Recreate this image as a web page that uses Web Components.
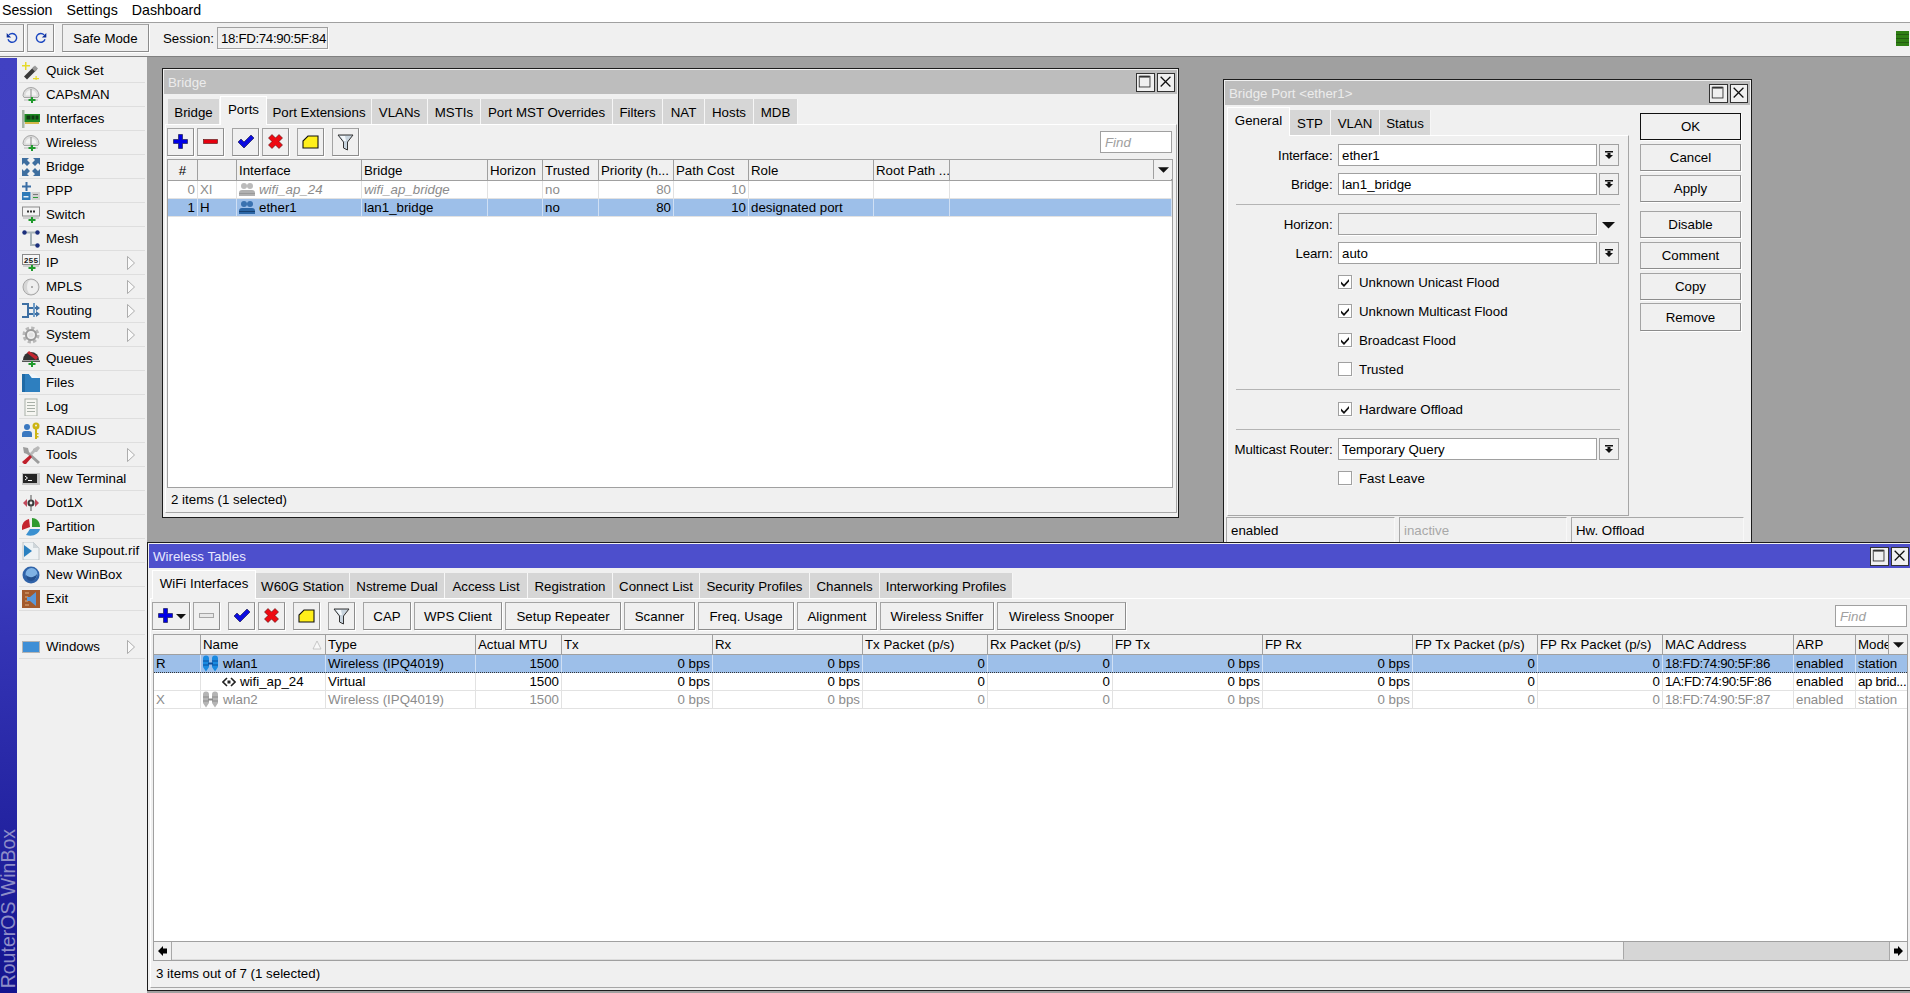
<!DOCTYPE html>
<html>
<head>
<meta charset="utf-8">
<title>WinBox</title>
<style>
	html, body { margin: 0; height: 100%; overflow: hidden; background: #a0a0a0; }
	body { font: 13.3px "Liberation Sans", Arial, sans-serif; color: #000; }
</style>
</head>
<body>
<wb-app>
	<wb-menubar>
		<span>Session</span><span>Settings</span><span>Dashboard</span>
	</wb-menubar>
	<wb-topbar>
		<wb-btn style="width:25px;margin-left:-1px"><wb-icon name="undo" size="16"></wb-icon></wb-btn>
		<wb-btn style="width:27px"><wb-icon name="redo" size="16"></wb-icon></wb-btn>
		<wb-btn style="width:87px;margin-left:5px">Safe Mode</wb-btn>
		<span style="margin-left:11px">Session:</span>
		<wb-readout>18:FD:74:90:5F:84</wb-readout>
		<wb-led></wb-led>
	</wb-topbar>
	<wb-sidebar>
		<wb-item icon="quickset">Quick Set</wb-item>
		<wb-item icon="antenna">CAPsMAN</wb-item>
		<wb-item icon="interfaces">Interfaces</wb-item>
		<wb-item icon="antenna">Wireless</wb-item>
		<wb-item icon="bridge">Bridge</wb-item>
		<wb-item icon="ppp">PPP</wb-item>
		<wb-item icon="switch">Switch</wb-item>
		<wb-item icon="mesh">Mesh</wb-item>
		<wb-item icon="ip" more>IP</wb-item>
		<wb-item icon="mpls" more>MPLS</wb-item>
		<wb-item icon="routing" more>Routing</wb-item>
		<wb-item icon="system" more>System</wb-item>
		<wb-item icon="queues">Queues</wb-item>
		<wb-item icon="files">Files</wb-item>
		<wb-item icon="log">Log</wb-item>
		<wb-item icon="radius">RADIUS</wb-item>
		<wb-item icon="tools" more>Tools</wb-item>
		<wb-item icon="terminal">New Terminal</wb-item>
		<wb-item icon="dot1x">Dot1X</wb-item>
		<wb-item icon="partition">Partition</wb-item>
		<wb-item icon="supout">Make Supout.rif</wb-item>
		<wb-item icon="winbox">New WinBox</wb-item>
		<wb-item icon="exit">Exit</wb-item>
		<wb-item></wb-item>
		<wb-item icon="windows" more>Windows</wb-item>
	</wb-sidebar>
	<wb-desktop>
		<wb-window heading="Bridge" style="left:15px;top:11px;width:1017px;height:450px">
			<wb-tabs>
				<wb-tab style="width:52px">Bridge</wb-tab>
				<wb-tab active style="width:47px">Ports</wb-tab>
				<wb-tab style="width:105px">Port Extensions</wb-tab>
				<wb-tab style="width:56px">VLANs</wb-tab>
				<wb-tab style="width:53px">MSTIs</wb-tab>
				<wb-tab style="width:132px">Port MST Overrides</wb-tab>
				<wb-tab style="width:50px">Filters</wb-tab>
				<wb-tab style="width:42px">NAT</wb-tab>
				<wb-tab style="width:49px">Hosts</wb-tab>
				<wb-tab style="width:44px">MDB</wb-tab>
			</wb-tabs>
			<wb-panel style="flex:1;margin-bottom:3px">
				<wb-bar>
					<wb-btn style="width:27px"><wb-icon name="add"></wb-icon></wb-btn>
					<wb-btn style="width:27px"><wb-icon name="remove"></wb-icon></wb-btn>
					<wb-btn style="width:27px;margin-left:5px"><wb-icon name="check"></wb-icon></wb-btn>
					<wb-btn style="width:27px"><wb-icon name="cross"></wb-icon></wb-btn>
					<wb-btn style="width:27px;margin-left:5px"><wb-icon name="note"></wb-icon></wb-btn>
					<wb-btn style="width:27px;margin-left:5px"><wb-icon name="filter"></wb-icon></wb-btn>
					<wb-find style="margin-right:4px"></wb-find>
				</wb-bar>
				<wb-table style="margin-top:3px;width:1006px;flex:1;--head-h:21px;--cols:30px 39px 125px 126px 55px 56px 75px 75px 125px 76px 1fr">
					<wb-row head>
						<wb-c c>#</wb-c><wb-c></wb-c><wb-c>Interface</wb-c><wb-c>Bridge</wb-c><wb-c>Horizon</wb-c><wb-c>Trusted</wb-c><wb-c>Priority (h...</wb-c><wb-c>Path Cost</wb-c><wb-c>Role</wb-c><wb-c>Root Path ...</wb-c><wb-c></wb-c>
					</wb-row>
					<wb-row off>
						<wb-c n>0</wb-c><wb-c>XI</wb-c><wb-c i><wb-icon name="portoff" size="16"></wb-icon><span style="margin-left:4px">wifi_ap_24</span></wb-c><wb-c i>wifi_ap_bridge</wb-c><wb-c></wb-c><wb-c>no</wb-c><wb-c n>80</wb-c><wb-c n>10</wb-c><wb-c></wb-c><wb-c></wb-c><wb-c></wb-c>
					</wb-row>
					<wb-row sel>
						<wb-c n>1</wb-c><wb-c>H</wb-c><wb-c><wb-icon name="port" size="16"></wb-icon><span style="margin-left:4px">ether1</span></wb-c><wb-c>lan1_bridge</wb-c><wb-c></wb-c><wb-c>no</wb-c><wb-c n>80</wb-c><wb-c n>10</wb-c><wb-c>designated port</wb-c><wb-c></wb-c><wb-c></wb-c>
					</wb-row>
				</wb-table>
				<wb-status style="height:24px;padding-bottom:2px">2 items (1 selected)</wb-status>
			</wb-panel>
		</wb-window>

		<wb-window heading="Bridge Port &lt;ether1&gt;" style="left:1076px;top:22px;width:529px;height:470px">
			<wb-split>
				<div>
					<wb-tabs style="padding-left:2px">
						<wb-tab active style="width:63px">General</wb-tab>
						<wb-tab style="width:41px">STP</wb-tab>
						<wb-tab style="width:49px">VLAN</wb-tab>
						<wb-tab style="width:51px">Status</wb-tab>
					</wb-tabs>
					<wb-form>
						<wb-field label="Interface:" value="ether1"></wb-field>
						<wb-field label="Bridge:" value="lan1_bridge"></wb-field>
						<wb-sep></wb-sep>
						<wb-field label="Horizon:" disabled></wb-field>
						<wb-field label="Learn:" value="auto"></wb-field>
						<wb-check checked>Unknown Unicast Flood</wb-check>
						<wb-check checked>Unknown Multicast Flood</wb-check>
						<wb-check checked>Broadcast Flood</wb-check>
						<wb-check>Trusted</wb-check>
						<wb-sep></wb-sep>
						<wb-check checked>Hardware Offload</wb-check>
						<wb-sep></wb-sep>
						<wb-field label="Multicast Router:" value="Temporary Query"></wb-field>
						<wb-check>Fast Leave</wb-check>
					</wb-form>
				</div>
				<wb-actions>
					<wb-btn primary>OK</wb-btn>
					<wb-btn>Cancel</wb-btn>
					<wb-btn>Apply</wb-btn>
					<wb-btn style="margin-top:5px">Disable</wb-btn>
					<wb-btn>Comment</wb-btn>
					<wb-btn>Copy</wb-btn>
					<wb-btn style="height:28px;margin-top:-1px">Remove</wb-btn>
				</wb-actions>
			</wb-split>
			<wb-cells>
				<wb-cell style="width:169px">enabled</wb-cell>
				<wb-cell style="width:168px;color:#a8a8a8">inactive</wb-cell>
				<wb-cell style="width:173px">Hw. Offload</wb-cell>
			</wb-cells>
		</wb-window>

		<wb-window heading="Wireless Tables" focused style="left:0;top:485px;width:1766px;height:449px">
			<wb-tabs style="padding-left:3px">
				<wb-tab active style="width:104px">WiFi Interfaces</wb-tab>
				<wb-tab style="width:94px">W60G Station</wb-tab>
				<wb-tab style="width:95px">Nstreme Dual</wb-tab>
				<wb-tab style="width:83px">Access List</wb-tab>
				<wb-tab style="width:85px">Registration</wb-tab>
				<wb-tab style="width:87px">Connect List</wb-tab>
				<wb-tab style="width:110px">Security Profiles</wb-tab>
				<wb-tab style="width:70px">Channels</wb-tab>
				<wb-tab style="width:133px">Interworking Profiles</wb-tab>
			</wb-tabs>
			<wb-panel style="flex:1;margin-bottom:1px">
				<wb-bar>
					<wb-btn style="width:38px"><wb-icon name="add"></wb-icon><wb-icon name="caret" size="10" style="margin-left:1px"></wb-icon></wb-btn>
					<wb-btn style="width:27px"><wb-icon name="removeoff"></wb-icon></wb-btn>
					<wb-btn style="width:27px;margin-left:5px"><wb-icon name="check"></wb-icon></wb-btn>
					<wb-btn style="width:27px"><wb-icon name="cross"></wb-icon></wb-btn>
					<wb-btn style="width:27px;margin-left:5px"><wb-icon name="note"></wb-icon></wb-btn>
					<wb-btn style="width:27px;margin-left:5px"><wb-icon name="filter"></wb-icon></wb-btn>
					<wb-btn style="width:48px;margin-left:5px">CAP</wb-btn>
					<wb-btn style="width:88px">WPS Client</wb-btn>
					<wb-btn style="width:116px">Setup Repeater</wb-btn>
					<wb-btn style="width:71px">Scanner</wb-btn>
					<wb-btn style="width:96px">Freq. Usage</wb-btn>
					<wb-btn style="width:80px">Alignment</wb-btn>
					<wb-btn style="width:114px">Wireless Sniffer</wb-btn>
					<wb-btn style="width:129px">Wireless Snooper</wb-btn>
					<wb-find style="margin-right:3px"></wb-find>
				</wb-bar>
				<wb-table style="margin:4px 0 0 1px;width:1755px;flex:1;--cols:47px 125px 150px 86px 151px 150px 125px 125px 150px 150px 125px 125px 131px 62px 53px">
					<wb-row head>
						<wb-c></wb-c><wb-c>Name<wb-icon name="sort" size="10" style="margin-left:auto;margin-right:1px"></wb-icon></wb-c><wb-c>Type</wb-c><wb-c>Actual MTU</wb-c><wb-c>Tx</wb-c><wb-c>Rx</wb-c><wb-c>Tx Packet (p/s)</wb-c><wb-c>Rx Packet (p/s)</wb-c><wb-c>FP Tx</wb-c><wb-c>FP Rx</wb-c><wb-c>FP Tx Packet (p/s)</wb-c><wb-c>FP Rx Packet (p/s)</wb-c><wb-c>MAC Address</wb-c><wb-c>ARP</wb-c><wb-c>Mode</wb-c>
					</wb-row>
					<wb-row sel focus>
						<wb-c>R</wb-c><wb-c><wb-icon name="wlan" size="17" style="margin:0 4px 0 -1px"></wb-icon>wlan1</wb-c><wb-c>Wireless (IPQ4019)</wb-c><wb-c n>1500</wb-c><wb-c n>0 bps</wb-c><wb-c n>0 bps</wb-c><wb-c n>0</wb-c><wb-c n>0</wb-c><wb-c n>0 bps</wb-c><wb-c n>0 bps</wb-c><wb-c n>0</wb-c><wb-c n>0</wb-c><wb-c mac>18:FD:74:90:5F:86</wb-c><wb-c>enabled</wb-c><wb-c>station</wb-c>
					</wb-row>
					<wb-row>
						<wb-c></wb-c><wb-c><wb-icon name="virtual" size="14" style="margin:0 4px 0 19px"></wb-icon>wifi_ap_24</wb-c><wb-c>Virtual</wb-c><wb-c n>1500</wb-c><wb-c n>0 bps</wb-c><wb-c n>0 bps</wb-c><wb-c n>0</wb-c><wb-c n>0</wb-c><wb-c n>0 bps</wb-c><wb-c n>0 bps</wb-c><wb-c n>0</wb-c><wb-c n>0</wb-c><wb-c mac>1A:FD:74:90:5F:86</wb-c><wb-c>enabled</wb-c><wb-c mac style="padding:0 0 0 2px">ap brid...</wb-c>
					</wb-row>
					<wb-row off>
						<wb-c>X</wb-c><wb-c><wb-icon name="wlanoff" size="17" style="margin:0 4px 0 -1px"></wb-icon>wlan2</wb-c><wb-c>Wireless (IPQ4019)</wb-c><wb-c n>1500</wb-c><wb-c n>0 bps</wb-c><wb-c n>0 bps</wb-c><wb-c n>0</wb-c><wb-c n>0</wb-c><wb-c n>0 bps</wb-c><wb-c n>0 bps</wb-c><wb-c n>0</wb-c><wb-c n>0</wb-c><wb-c mac>18:FD:74:90:5F:87</wb-c><wb-c>enabled</wb-c><wb-c>station</wb-c>
					</wb-row>
					<wb-scroll slot="foot"></wb-scroll>
				</wb-table>
				<wb-status style="height:26px;padding-bottom:2px">3 items out of 7 (1 selected)</wb-status>
			</wb-panel>
		</wb-window>
	</wb-desktop>
</wb-app>

<script>
const
	GREEN_PLUS = '<path d="M6.5 13H9v-2h2v2h2.5v2H11v2H9v-2H6.5z" fill="#1f9a2c"/>',
	OUTLINE = 'stroke="#10103a" stroke-width=".6"',
	ICONS = Object.freeze({
		undo: '<path d="M5.5 5.5a5 5 0 1 1-1 5" fill="none" stroke="#1a46c0" stroke-width="1.6"/><path d="M3 3.5v5h5z" fill="#0d2f9c"/>',
		redo: '<path d="M12.5 5.5a5 5 0 1 0 1 5" fill="none" stroke="#1a46c0" stroke-width="1.6"/><path d="M15 3.5v5h-5z" fill="#0d2f9c"/>',
		quickset: '<path d="M2 14.5 12 4.5l3 3-10 10z" fill="#3a3a3a"/><path d="M10 6.5l3-3 3 3-3 3z" fill="#9a9a9a"/><path d="M3 0h1.5v3H8v1.5H4.5V8H3V4.5H0V3h3z" fill="#e6d92a"/><path d="M13.5 14h1.2v2H17v1.2h-2.3V18h-1.2v-.8H11V16h2.5z" fill="#e6d92a"/>',
		antenna: '<path d="M1 9.5a8 8 0 0 1 16 0l-1 2H2z" fill="#dcdcdc" stroke="#a6a6a6"/><path d="M3.5 9.5a5.5 5.5 0 0 1 11 0z" fill="#f2f2f2"/><rect x="8.5" y="3" width="1" height="10" fill="#8a8a8a"/><rect x="2" y="13.5" width="14" height="1" fill="#b8b8b8"/>' + GREEN_PLUS,
		interfaces: '<rect x="0" y="0" width="2.5" height="18" fill="#a7b5a7"/><rect x="2.5" y="4" width="15.5" height="8" fill="#1d8a22"/><rect x="4.5" y="5.5" width="4" height="4" fill="#123b14"/><rect x="9.5" y="5.5" width="3" height="4" fill="#123b14"/><rect x="13.5" y="5.5" width="3" height="4" fill="#123b14"/><path d="M3 12h14v2H3z" fill="#d4b84a"/>',
		bridge: '<g fill="#3e6e9f"><path d="M0 0h7L5 2l3 3-3 3-3-3-2 2z"/><path d="M18 0v7l-2-2-3 3-3-3 3-3-2-2z"/><path d="M0 18v-7l2 2 3-3 3 3-3 3 2 2z"/><path d="M18 18h-7l2-2-3-3 3-3 3 3 2-2z"/></g>',
		ppp: '<path d="M3.5 0h2v3.5H9v2H5.5V9h-2V5.5H0v-2h3.5z" fill="#3a6ea5"/><rect x="0" y="10" width="8.5" height="8" fill="#2e7ab8"/><rect x="1.5" y="14" width="5" height="1.5" fill="#e6f0f8"/><rect x="9.5" y="10" width="8.5" height="8" fill="#d2d2d2"/><rect x="11" y="12" width="5" height="1" fill="#7a7a7a"/><rect x="11" y="15" width="5" height="1" fill="#2f9a3a"/>',
		switch: '<rect x=".5" y="1" width="17" height="9" fill="#f4f4f4" stroke="#8a8a8a"/><g fill="#333"><rect x="5" y="4.5" width="2" height="2"/><rect x="8" y="4.5" width="2" height="2"/><rect x="11" y="4.5" width="2" height="2"/></g><rect x="1" y="11.5" width="16" height="1" fill="#b0b0b0"/>' + GREEN_PLUS,
		mesh: '<path d="M3 2.5h12M9 2.5V15h5" fill="none" stroke="#a8b4b8" stroke-width="2"/><circle cx="2.5" cy="2.5" r="2.2" fill="#1c2f7c"/><circle cx="15.5" cy="2.5" r="2.2" fill="#1c2f7c"/><circle cx="15.5" cy="15.5" r="2.2" fill="#1c2f7c"/>',
		ip: '<rect x=".5" y=".5" width="17" height="10" fill="#f6f6f6" stroke="#8a8a8a"/><text x="9" y="8.5" font-family="Liberation Mono, monospace" font-size="8" font-weight="700" text-anchor="middle" fill="#222">255</text><rect x="1" y="11.5" width="16" height="1" fill="#b0b0b0"/>' + GREEN_PLUS,
		mpls: '<circle cx="9" cy="9" r="8" fill="#d6d6d6" stroke="#a8a8a8"/><path d="M9 2a7 7 0 0 1 0 14 4 7 0 0 1 0-14z" fill="#efefef"/><circle cx="10" cy="9" r="1" fill="#999"/>',
		routing: '<path d="M0 2h6v13H0M6 6h10M6 12h10" fill="none" stroke="#3d6fa3" stroke-width="2"/><path d="M12 1v14" fill="none" stroke="#6f9dc8" stroke-width="2"/><path d="M14 3l4 3-4 3zM14 9l4 3-4 3z" fill="#3d6fa3"/>',
		system: '<circle cx="9" cy="9" r="6.5" fill="none" stroke="#b8b8b8" stroke-width="4" stroke-dasharray="3 2"/><circle cx="9" cy="9" r="5" fill="none" stroke="#9a9a9a" stroke-width="2"/><circle cx="9" cy="9" r="2.5" fill="#e2e2e2"/>',
		queues: '<path d="M1 10a8 8 0 0 1 16 0z" fill="#333"/><path d="M5 3l2-2 9 6-2 3z" fill="#c2242e"/><rect x="0" y="10.5" width="18" height="1.5" fill="#555"/>' + GREEN_PLUS,
		files: '<path d="M0 0h7l3 4h8v14H0z" fill="#2e7fbf"/><path d="M7 0l3 4h8L12 0z" fill="#f0f6fb"/><path d="M0 0h3v18H0z" fill="#1f6aa6"/>',
		log: '<rect x="3" y="1" width="12" height="17" fill="#f6f6f2" stroke="#a8b0a8"/><g fill="#a8b0a8"><rect x="5" y="4" width="8" height="1"/><rect x="5" y="7" width="8" height="1"/><rect x="5" y="10" width="8" height="1"/><rect x="5" y="13" width="8" height="1"/></g>',
		radius: '<circle cx="5" cy="5" r="3" fill="#3a78c0"/><path d="M0 15v-3a3 3 0 0 1 3-3h4a3 3 0 0 1 3 3v3z" fill="#3a78c0"/><circle cx="14" cy="4" r="3.5" fill="#cdb513"/><circle cx="14" cy="3.5" r="1" fill="#f0f0f0"/><path d="M13 7h2v10h-2zM15 11h1.5v1.5H15zM15 14h1.5v1.5H15z" fill="#cdb513"/>',
		tools: '<path d="M1 1l5 1 1 4 11 10-2 2L5 8 2 7z" fill="#9c9c9c"/><path d="M16 0l2 2-3 4h-2L10 9 8 7l3-3V3z" fill="#b8b8b8"/><path d="M8 9l2 2-6 7H2l-2-2z" fill="#c0202c"/>',
		terminal: '<rect x="0" y="3" width="18" height="12" fill="#c4c4c4"/><rect x="1" y="4" width="14" height="9" fill="#252525"/><path d="M3 6l2.5 2L3 10" fill="none" stroke="#fff"/><rect x="6" y="10" width="4" height="1" fill="#fff"/>',
		dot1x: '<g fill="#c0485a"><path d="M1 9l4-4v8zM17 9l-4-4v8z"/></g><circle cx="9" cy="9" r="3.5" fill="#3a3a3a"/><rect x="8.5" y="1" width="1" height="16" fill="#555"/><circle cx="9" cy="9" r="1.4" fill="#eee"/>',
		partition: '<path d="M7 1 8 9 0 12C-1 7 2 2 7 1z" fill="#c4242e"/><path d="M10 0c4 0 8 3 8 9h-8z" fill="#2f9a2f"/><path d="M8 11h10c-1 5-7 8-14 6z" fill="#3a90d0"/>',
		supout: '<path d="M1 0h10l6 6v12H1z" fill="#eef2f4" stroke="#b4bcc0" stroke-width=".8"/><path d="M11 0v6h6z" fill="#cfd6da"/><path d="M2 3v12l8-6z" fill="#2a80c0"/>',
		winbox: '<circle cx="9" cy="9" r="8.5" fill="#2f62a8"/><circle cx="9.5" cy="8" r="6" fill="#7fb2e4"/><path d="M4 9c3 3 8 3 11-1 0 4-3 7-6 7-3 0-5-3-5-6z" fill="#24508e"/>',
		exit: '<rect x="0" y="0" width="18" height="18" fill="#a35a2c"/><path d="M3 3h4M3 7h3M3 11h3M3 15h4" stroke="#e0b080"/><path d="M14 2v14L8 11H5V7h3z" fill="#5a98d8"/>',
		windows: '<rect x="0" y="3" width="18" height="12" fill="#b4b4b4"/><rect x="1" y="4" width="16" height="10" fill="#3f8fd6"/>',
		add: '<path d="M6.5 1.5h4v5h5v4h-5v5h-4v-5h-5v-4h5z" fill="#0000e6" ' + OUTLINE + '/>',
		remove: '<rect x="1.5" y="6.5" width="14" height="4" fill="#e6000e" stroke="#501010" stroke-width=".6"/>',
		removeoff: '<rect x="1.5" y="6.5" width="14" height="4" fill="#e8e8e8" stroke="#a6a6a6"/>',
		check: '<path d="M1 9l3-3 3 3 7-7 3 3L7 15z" fill="#0c0ce0" ' + OUTLINE + '/>',
		cross: '<path d="M5 1.5 8.5 5 12 1.5 15.5 5 12 8.5l3.5 3.5-3.500 3.5L8.5 12 5 15.5 1.5 12 5 8.5 1.5 5z" fill="#ee0a12" stroke="#501010" stroke-width=".6"/>',
		note: '<path d="M6 3h10v12H1V8z" fill="#ffef1a" stroke="#111" stroke-width="1.1"/>',
		filter: '<path d="M1 2h15l-5.5 7v8l-4-2V9z" fill="#c8d4de" stroke="#333"/><path d="M3 3h5l1 5H7z" fill="#f4f8fb"/>',
		caret: '<path d="M0 3h10L5 8z" fill="#111"/>',
		sort: '<path d="M5 1l4 8H1z" fill="#f8f8f8" stroke="#bbb" stroke-width=".8"/>',
		combo: '<rect x="3" y="3" width="8" height="1.5" fill="#111"/><path d="M5.5 5v2H3l4 4 4-4H8.5V5z" fill="#111"/>',
		port: '<circle cx="5" cy="4" r="3" fill="#3a72b0"/><circle cx="11" cy="4" r="3" fill="#3a72b0"/><path d="M0 14v-3a3 3 0 0 1 3-3h10a3 3 0 0 1 3 3v3z" fill="#2c66a6"/><rect x="0" y="11" width="16" height="1" fill="#17406f"/>',
		portoff: '<circle cx="5" cy="4" r="3" fill="#bbb"/><circle cx="11" cy="4" r="3" fill="#bbb"/><path d="M0 14v-3a3 3 0 0 1 3-3h10a3 3 0 0 1 3 3v3z" fill="#b0b0b0"/><rect x="0" y="11" width="16" height="1" fill="#999"/>',
		wlan: '<g fill="#1a8ae0"><path d="M1 3.5a3 3 0 0 1 6 0V12l-3 4.5L1 12z"/><path d="M10 3.5a3 3 0 0 1 6 0V12l-3 4.5-3-4.5z"/></g><path d="M1 6h6M10 6h6M1 10h6M10 10h6" stroke="#0b4f9e"/><rect x="6" y="7.5" width="5" height="2" fill="#0b4f9e"/>',
		wlanoff: '<g fill="#b4b4b4"><path d="M1 3.5a3 3 0 0 1 6 0V12l-3 4.5L1 12z"/><path d="M10 3.5a3 3 0 0 1 6 0V12l-3 4.5-3-4.5z"/></g><path d="M1 6h6M10 6h6M1 10h6M10 10h6" stroke="#8c8c8c"/><rect x="6" y="7.5" width="5" height="2" fill="#8c8c8c"/>',
		virtual: '<path d="M5 3 1 7l4 4M9 3l4 4-4 4" fill="none" stroke="#222" stroke-width="1.6"/><rect x="5.5" y="5.5" width="3" height="3" fill="#222"/>'
	}),
	VIEWBOX = Object.freeze({ combo: 14, caret: 10, sort: 10, port: 16, portoff: 16, virtual: 14, wlan: 17, wlanoff: 17 }),
	BTN_EDGE = `
		border: 1px solid;
		border-color: #a4a4a4 #8c8c8c #8c8c8c #a4a4a4;
		box-shadow: 1px 1px 0 #fff;
		background: #f0f0f0;
		box-sizing: border-box;
	`;

//	all elements are the same: css plus a markup built from the element's attributes
function define(tag, css, render) {
	customElements.define(tag, class extends HTMLElement {
		connectedCallback() {
			if (this.shadowRoot) {
				return;
			}
			const s = this.attachShadow({ mode: 'open' });
			s.innerHTML = `<style>${css}</style>` + (render ? render(this) : '<slot></slot>');
		}
	});
}

function icon(name, size) {
	const box = VIEWBOX[name] || 18;
	return `<svg width="${size || box}" height="${size || box}" viewBox="0 0 ${box} ${box}" style="display:block">${ICONS[name] || ''}</svg>`;
}

define('wb-icon', ':host { display: inline-flex; flex: none; }', e => icon(e.getAttribute('name'), +e.getAttribute('size')));

define('wb-app', `
	:host {
		display: grid;
		grid-template-columns: 147px 1fr;
		grid-template-rows: 23px 34px 1fr;
		height: 993px;
		width: 1910px;
		overflow: hidden;
	}
`);

define('wb-menubar', `
	:host {
		grid-column: 1 / -1;
		display: flex;
		align-items: center;
		gap: 14px;
		padding: 0 0 2px 2px;
		background: #fff;
		border-bottom: 1px solid #a0a0a0;
		box-sizing: border-box;
		font-size: 14.2px;
	}
`);

define('wb-topbar', `
	:host {
		grid-column: 1 / -1;
		display: flex;
		align-items: center;
		gap: 3px;
		padding: 0 1px 3px 0;
		background: #f0f0f0;
		border-bottom: 1px solid #808080;
		box-sizing: border-box;
	}
`);

define('wb-readout', `
	:host {
		display: flex;
		align-items: center;
		width: 111px;
		height: 22px;
		padding-left: 3px;
		box-sizing: border-box;
		border: 1px solid #a0a0a0;
		box-shadow: 1px 1px 0 #fff;
		white-space: nowrap;
		letter-spacing: -.35px;
	}
`);

define('wb-led', `
	:host {
		margin-left: auto;
		width: 13px;
		height: 15px;
		background: repeating-linear-gradient(#2f7f14 0 3px, #235c10 3px 4px);
	}
`);

define('wb-btn', `
	:host {
		display: inline-flex;
		align-items: center;
		justify-content: center;
		flex: none;
		height: var(--btn-h, 28px);
		${BTN_EDGE}
		white-space: nowrap;
	}
	:host([primary]) {
		border-color: #111;
	}
`);

define('wb-sidebar', `
	:host {
		display: flex;
		height: 936px;
		background: #f0f0f0;
	}
	.strip {
		flex: none;
		width: 17px;
		margin-top: 1px;
		display: flex;
		align-items: flex-end;
		justify-content: center;
		overflow: hidden;
		background: linear-gradient(#4141c2, #3a3abc 55%, #14148f);
	}
	.strip span {
		writing-mode: vertical-rl;
		transform: rotate(180deg);
		font-size: 19.5px;
		line-height: 17px;
		color: #8e8ec8;
		white-space: nowrap;
		padding-top: 5px;
	}
	.items {
		flex: 1;
		padding: 2px 2px 0;
	}
`, () => `<div class="strip"><span>RouterOS WinBox</span></div><div class="items"><slot></slot></div>`);

define('wb-item', `
	:host {
		display: flex;
		align-items: center;
		height: 24px;
		box-sizing: border-box;
		border-bottom: 1px solid #dedede;
		white-space: nowrap;
		padding-left: 3px;
	}
	svg.more {
		margin-left: auto;
		margin-right: 10px;
	}
	.text {
		margin-left: 6px;
	}
`, e => {
	const more = e.hasAttribute('more') ? `<svg class="more" width="8" height="14" viewBox="0 0 8 14"><path d="M.5.5 7.5 7 .5 13.5z" fill="#fafafa" stroke="#9a9a9a" stroke-width=".8"/></svg>` : '';
	return (e.getAttribute('icon') ? icon(e.getAttribute('icon'), 18) : '<span style="width:18px"></span>') + '<span class="text"><slot></slot></span>' + more;
});

define('wb-desktop', `
	:host {
		display: block;
		position: relative;
		background: #a0a0a0;
		height: 936px;
		overflow: hidden;
	}
`);

define('wb-window', `
	:host {
		position: absolute;
		display: flex;
		flex-direction: column;
		box-sizing: border-box;
		border: 1px solid #1c1c1c;
		padding: 1px;
		background: #f0f0f0;
		overflow: hidden;
	}
	.title {
		flex: none;
		display: flex;
		align-items: center;
		height: 24px;
		padding: 0 2px 0 4px;
		background: #bdbdbd;
		color: #ececec;
		margin-bottom: 2px;
		white-space: nowrap;
		gap: 2px;
	}
	:host([focused]) .title {
		background: #4d4fcc;
		color: #e8e8ff;
	}
	.title span {
		margin-right: auto;
		padding-top: 1px;
	}
	svg {
		flex: none;
		background: #f0f0f0;
		border: 1px solid #333;
		box-sizing: border-box;
	}
`, e => `<div class="title"><span>${e.getAttribute('heading').replace(/</g, '&lt;')}</span>
	<svg width="19" height="19" viewBox="0 0 19 19"><rect x="2.5" y="2.5" width="12" height="12" fill="none" stroke="#333"/><rect x="3" y="2" width="11" height="2" fill="#333"/></svg>
	<svg width="18" height="19" viewBox="0 0 18 19"><path d="M3 3l11 11M14 3 3 14" stroke="#111" stroke-width="1.4"/></svg>
</div><slot></slot>`);

define('wb-tabs', `
	:host {
		flex: none;
		display: flex;
		align-items: flex-start;
		height: 28px;
		padding-left: 4px;
		position: relative;
		z-index: 1;
	}
`);

define('wb-tab', `
	:host {
		display: flex;
		align-items: center;
		justify-content: center;
		flex: none;
		box-sizing: border-box;
		height: 25px;
		margin-top: 3px;
		padding-top: 1px;
		background: #d6d6d6;
		border-right: 1px solid #f6f6f6;
		white-space: nowrap;
	}
	:host([active]) {
		height: 29px;
		margin-top: 0;
		padding: 0 0 3px;
		background: #f0f0f0;
		border: 1px solid #fff;
		border-bottom: 0;
	}
`);

define('wb-panel', `
	:host {
		display: flex;
		flex-direction: column;
		box-sizing: border-box;
		margin-left: 1px;
		padding: 3px 0 0 1px;
		border: 1px solid #a6a6a6;
		border-color: #fff #a6a6a6 #a6a6a6 #fff;
		min-height: 0;
	}
`);

define('wb-bar', `
	:host {
		flex: none;
		display: flex;
		gap: 3px;
		height: 28px;
	}
`);

define('wb-find', `
	:host {
		display: flex;
		align-items: center;
		margin: 3px 0 0 auto;
		width: 72px;
		height: 22px;
		box-sizing: border-box;
		padding-left: 4px;
		border: 1px solid #a0a0a0;
		background: #fff;
		color: #a0a0a0;
		font-style: italic;
	}
`, () => 'Find');

define('wb-table', `
	:host {
		display: flex;
		flex-direction: column;
		position: relative;
		box-sizing: border-box;
		border: 1px solid #a0a0a0;
		background: #fff;
		min-height: 0;
	}
	.rows {
		flex: 1;
		min-height: 0;
		overflow: hidden;
	}
	.drop {
		position: absolute;
		top: 0;
		right: 0;
		width: 19px;
		height: 19px;
		display: flex;
		align-items: center;
		justify-content: center;
		background: #f0f0f0;
		border-left: 1px solid #a0a0a0;
		box-sizing: border-box;
	}
`, () => `<div class="rows"><slot></slot></div><slot name="foot"></slot><div class="drop">${icon('caret', 11)}</div>`);

define('wb-row', `
	:host {
		display: grid;
		grid-template-columns: var(--cols);
		height: 18px;
		box-sizing: border-box;
		border-bottom: 1px solid #e2e2e2;
		--sep: #e2e2e2;
	}
	:host([head]) {
		height: var(--head-h, 20px);
		background: #f0f0f0;
		border-bottom-color: #a0a0a0;
		--sep: #a0a0a0;
	}
	:host([sel]) {
		background: #9dbfe9;
		--sep: #cfdff4;
	}
	:host([focus]) {
		border-bottom: 1px dotted #333;
	}
	:host([off]) {
		color: #8c8c8c;
	}
`);

define('wb-c', `
	:host {
		display: flex;
		align-items: center;
		min-width: 0;
		overflow: hidden;
		box-sizing: border-box;
		padding: 0 2px;
		border-right: 1px solid var(--sep);
		white-space: nowrap;
	}
	:host([n]) {
		justify-content: flex-end;
	}
	:host([c]) {
		justify-content: center;
	}
	:host([i]) {
		font-style: italic;
	}
	:host([mac]) {
		letter-spacing: -.35px;
	}
`);

define('wb-scroll', `
	:host {
		flex: none;
		display: flex;
		height: 18px;
		border-top: 1px solid #a0a0a0;
		box-sizing: content-box;
		background: #d6d6d6;
	}
	div {
		display: flex;
		align-items: center;
		justify-content: center;
		box-sizing: border-box;
		background: #f0f0f0;
		border-right: 1px solid #a8a8a8;
	}
	.thumb {
		width: 1452px;
		border-bottom: 1px solid #dcdcdc;
	}
	.track {
		flex: 1;
		background: none;
		border: 0;
	}
	.btn {
		width: 18px;
	}
	.next {
		border-right: 0;
		border-left: 1px solid #a8a8a8;
	}
`, () => `<div class="btn"><svg width="9" height="10" viewBox="0 0 9 10"><path d="M5 0v2.5h4v5H5V10L0 5z"/></svg></div><div class="thumb"></div><div class="track"></div><div class="btn next"><svg width="9" height="10" viewBox="0 0 9 10"><path d="M4 0v2.5H0v5h4V10l5-5z"/></svg></div>`);

define('wb-status', `
	:host {
		flex: none;
		display: flex;
		align-items: center;
		padding-left: 4px;
		box-sizing: border-box;
	}
`);

define('wb-split', `
	:host {
		flex: none;
		display: flex;
		align-items: flex-start;
	}
`);

define('wb-form', `
	:host {
		display: grid;
		row-gap: 7px;
		align-content: start;
		width: 402px;
		height: 381px;
		box-sizing: border-box;
		margin-left: 2px;
		padding: 8px 0 0 8px;
		border: 1px solid #a6a6a6;
		border-color: #fff #a6a6a6 #a6a6a6 #fff;
	}
`);

define('wb-sep', `
	:host {
		display: block;
		width: 384px;
		height: 1px;
		margin: 2px 0 1px;
		background: #b4b4b4;
	}
`);

define('wb-field', `
	:host {
		display: grid;
		grid-template-columns: 100.5px 259px 20px;
		column-gap: 1.5px;
		height: 22px;
		align-items: stretch;
	}
	label {
		display: flex;
		align-items: center;
		justify-content: flex-end;
		padding-right: 4px;
		white-space: nowrap;
		letter-spacing: -.1px;
	}
	.input {
		display: flex;
		align-items: center;
		padding-left: 3px;
		box-sizing: border-box;
		border: 1px solid #a0a0a0;
		background: #fff;
	}
	:host([disabled]) .input {
		background: #f0f0f0;
		box-shadow: 1px 1px 0 #fff;
	}
	.drop {
		display: flex;
		align-items: center;
		justify-content: center;
		box-sizing: border-box;
		border: 1px solid #a0a0a0;
		background: #f0f0f0;
	}
	:host([disabled]) .drop {
		border: 0;
	}
`, e => `<label>${e.getAttribute('label')}</label><div class="input">${e.getAttribute('value') || ''}</div><div class="drop">${e.hasAttribute('disabled') ? icon('caret', 13) : icon('combo', 14)}</div>`);

define('wb-check', `
	:host {
		display: flex;
		align-items: center;
		height: 22px;
		padding-left: 102px;
		white-space: nowrap;
	}
	.box {
		flex: none;
		width: 14px;
		height: 14px;
		margin-right: 7px;
		box-sizing: border-box;
		border: 1px solid #a0a0a0;
		background: #fff;
		box-shadow: 1px 1px 0 #f8f8f8;
	}
`, e => `<span class="box">${e.hasAttribute('checked') ? '<svg width="12" height="12" viewBox="0 0 12 12" style="display:block"><path d="M2 5.5 5 8.500l5-5.500v2.500l-5 5.500-3-3z" fill="#111"/></svg>' : ''}</span><slot></slot>`);

define('wb-actions', `
	:host {
		display: flex;
		flex-direction: column;
		gap: 4px;
		margin: 6px 0 0 11px;
		width: 101px;
		--btn-h: 27px;
	}
`);

define('wb-cells', `
	:host {
		flex: none;
		display: flex;
		gap: 4px;
		margin: 1px 0 0 1px;
	}
`);

define('wb-cell', `
	:host {
		display: flex;
		align-items: center;
		height: 26px;
		padding-left: 4px;
		box-sizing: border-box;
		border: 1px solid #a8a8a8;
		border-right-color: #f8f8f8;
		border-bottom: 0;
	}
`);
</script>
</body>
</html>
